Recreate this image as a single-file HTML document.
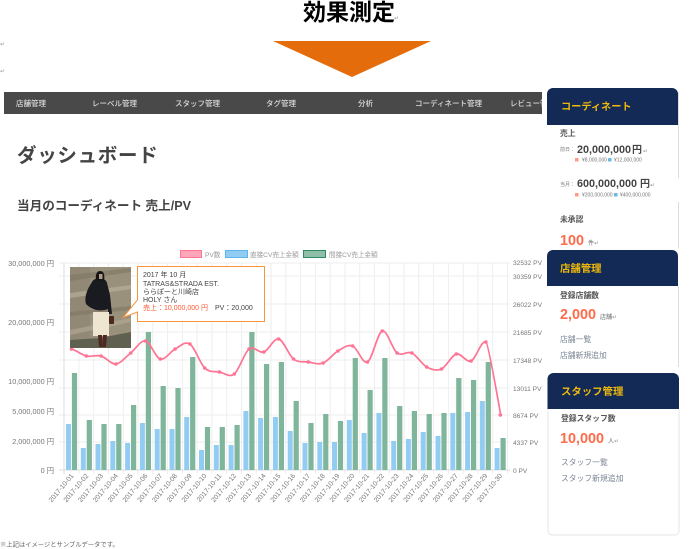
<!DOCTYPE html>
<html lang="ja">
<head>
<meta charset="utf-8">
<title>効果測定</title>
<style>
html,body{margin:0;padding:0;background:#fff;width:700px;height:549px;overflow:hidden}
svg.root{display:block;filter:blur(.35px)}
text{font-family:"Liberation Sans","Noto Sans CJK JP",sans-serif}
.nav{fill:#dcdcdc;font-size:7.5px;font-weight:500}
.yl{fill:#777;font-size:7.3px;text-anchor:end}
.yr{fill:#777;font-size:6.6px}
.xl{fill:#777;font-size:6.8px;text-anchor:end}
.lg{fill:#999;font-size:6.6px}
.tt{fill:#444;font-size:7px}
.cardt{fill:#f0b90b;font-size:10.4px;font-weight:700}
.lab{fill:#555;font-size:7.8px;font-weight:700}
.big{fill:#ff6b4a;font-size:14.4px;font-weight:700}
.lnk{fill:#7a8494;font-size:7.8px}
.num{fill:#444;font-size:10.8px;font-weight:700}
.tiny{fill:#777;font-size:5px}
.mk{fill:#999;font-size:6px}
.b rect{fill:#93ccf3}
.g rect{fill:#7eb59b}
.gd line{stroke:#eeeeee;stroke-width:1}
.p circle{fill:#ff7393;r:1.8px}
</style>
</head>
<body>
<svg class="root" width="700" height="549" viewBox="0 0 700 549" xmlns="http://www.w3.org/2000/svg">
<!-- heading -->
<text x="303" y="20" font-size="23" font-weight="700" fill="#000" style="font-weight:700">効果測定</text>
<text x="394" y="20" class="mk">↵</text>
<text x="0" y="46" class="mk">↵</text>
<text x="0" y="73" class="mk">↵</text>
<polygon points="273,41 431,41 352,77" fill="#e46c0a"/>

<!-- nav -->
<rect x="4" y="92" width="538" height="22" fill="#494949"/>
<text x="16" y="106" class="nav">店舗管理</text>
<text x="92" y="106" class="nav">レーベル管理</text>
<text x="175" y="106" class="nav">スタッフ管理</text>
<text x="266" y="106" class="nav">タグ管理</text>
<text x="358" y="106" class="nav">分析</text>
<text x="415" y="106" class="nav">コーディネート管理</text>
<svg x="0" y="90" width="542" height="26"><text x="510" y="16" class="nav">レビュー管理</text></svg>

<!-- titles -->
<text x="17" y="162" font-size="19.5" font-weight="700" fill="#444" letter-spacing=".7">ダッシュボード</text>
<text x="17" y="210" font-size="12.6" font-weight="700" fill="#444">当月のコーディネート 売上/PV</text>

<!-- legend -->
<rect x="180.5" y="250.5" width="21" height="7" fill="#ffa6bb" stroke="#ff7393"/>
<text x="205" y="257" class="lg">PV数</text>
<rect x="225.5" y="250.5" width="22" height="7" fill="#93ccf3" stroke="#5cb3ee"/>
<text x="250" y="257" class="lg">直接CV売上金額</text>
<rect x="303.5" y="250.5" width="22" height="7" fill="#8fbfa8" stroke="#2e8b62"/>
<text x="329" y="257" class="lg">間接CV売上金額</text>

<!-- grid -->
<g class="gd">
<line x1="59" x2="510" y1="263" y2="263"/><line x1="59" x2="510" y1="276" y2="276"/><line x1="59" x2="510" y1="304" y2="304"/><line x1="59" x2="510" y1="332" y2="332"/><line x1="59" x2="510" y1="360" y2="360"/><line x1="59" x2="510" y1="388" y2="388"/><line x1="59" x2="510" y1="415" y2="415"/><line x1="59" x2="510" y1="442" y2="442"/>
<line x1="64" x2="64" y1="263" y2="474" style="stroke:#ddd"/><line x1="78.900" x2="78.900" y1="263" y2="474"/><line x1="93.700" x2="93.700" y1="263" y2="474"/><line x1="108.500" x2="108.500" y1="263" y2="474"/><line x1="123.300" x2="123.300" y1="263" y2="474"/><line x1="138" x2="138" y1="263" y2="474"/><line x1="152.800" x2="152.800" y1="263" y2="474"/><line x1="167.600" x2="167.600" y1="263" y2="474"/><line x1="182.400" x2="182.400" y1="263" y2="474"/><line x1="197.100" x2="197.100" y1="263" y2="474"/><line x1="211.900" x2="211.900" y1="263" y2="474"/><line x1="226.700" x2="226.700" y1="263" y2="474"/><line x1="241.500" x2="241.500" y1="263" y2="474"/><line x1="256.300" x2="256.300" y1="263" y2="474"/><line x1="271" x2="271" y1="263" y2="474"/><line x1="285.800" x2="285.800" y1="263" y2="474"/><line x1="300.600" x2="300.600" y1="263" y2="474"/><line x1="315.400" x2="315.400" y1="263" y2="474"/><line x1="330.200" x2="330.200" y1="263" y2="474"/><line x1="344.900" x2="344.900" y1="263" y2="474"/><line x1="359.700" x2="359.700" y1="263" y2="474"/><line x1="374.500" x2="374.500" y1="263" y2="474"/><line x1="389.300" x2="389.300" y1="263" y2="474"/><line x1="404" x2="404" y1="263" y2="474"/><line x1="418.800" x2="418.800" y1="263" y2="474"/><line x1="433.600" x2="433.600" y1="263" y2="474"/><line x1="448.400" x2="448.400" y1="263" y2="474"/><line x1="463.200" x2="463.200" y1="263" y2="474"/><line x1="477.900" x2="477.900" y1="263" y2="474"/><line x1="492.700" x2="492.700" y1="263" y2="474"/><line x1="507.500" x2="507.500" y1="263" y2="474"/>
<line x1="59" x2="510" y1="470" y2="470" style="stroke:#dcdcdc"/>
</g>

<!-- bars blue -->
<g class="b">
<rect x="66" y="424" width="5" height="46"/><rect x="80.800" y="448" width="5" height="22"/><rect x="95.500" y="444" width="5" height="26"/><rect x="110.300" y="441" width="5" height="29"/><rect x="125.100" y="443" width="5" height="27"/><rect x="139.900" y="423" width="5" height="47"/><rect x="154.700" y="429" width="5" height="41"/><rect x="169.500" y="429" width="5" height="41"/><rect x="184.200" y="417" width="5" height="53"/><rect x="199" y="450" width="5" height="20"/><rect x="213.800" y="445" width="5" height="25"/><rect x="228.600" y="445" width="5" height="25"/><rect x="243.400" y="411" width="5" height="59"/><rect x="258.100" y="418" width="5" height="52"/><rect x="272.900" y="417" width="5" height="53"/><rect x="287.700" y="431" width="5" height="39"/><rect x="302.500" y="443" width="5" height="27"/><rect x="317.300" y="442" width="5" height="28"/><rect x="332" y="442" width="5" height="28"/><rect x="346.800" y="420" width="5" height="50"/><rect x="361.600" y="433" width="5" height="37"/><rect x="376.400" y="413" width="5" height="57"/><rect x="391.200" y="441" width="5" height="29"/><rect x="405.900" y="439" width="5" height="31"/><rect x="420.700" y="432" width="5" height="38"/><rect x="435.500" y="436" width="5" height="34"/><rect x="450.300" y="413" width="5" height="57"/><rect x="465.100" y="412" width="5" height="58"/><rect x="479.800" y="401" width="5" height="69"/><rect x="494.600" y="448" width="5" height="22"/>
</g>
<!-- bars green -->
<g class="g">
<rect x="71.900" y="373" width="5.200" height="97"/><rect x="86.700" y="420" width="5.200" height="50"/><rect x="101.400" y="424" width="5.200" height="46"/><rect x="116.200" y="424" width="5.200" height="46"/><rect x="131" y="405" width="5.200" height="65"/><rect x="145.800" y="332" width="5.200" height="138"/><rect x="160.600" y="386" width="5.200" height="84"/><rect x="175.400" y="388" width="5.200" height="82"/><rect x="190.100" y="357" width="5.200" height="113"/><rect x="204.900" y="427" width="5.200" height="43"/><rect x="219.700" y="427" width="5.200" height="43"/><rect x="234.500" y="425" width="5.200" height="45"/><rect x="249.300" y="332" width="5.200" height="138"/><rect x="264" y="364" width="5.200" height="106"/><rect x="278.800" y="362" width="5.200" height="108"/><rect x="293.600" y="401" width="5.200" height="69"/><rect x="308.400" y="423" width="5.200" height="47"/><rect x="323.200" y="414" width="5.200" height="56"/><rect x="337.900" y="421" width="5.200" height="49"/><rect x="352.700" y="358" width="5.200" height="112"/><rect x="367.500" y="390" width="5.200" height="80"/><rect x="382.300" y="358" width="5.200" height="112"/><rect x="397.100" y="406" width="5.200" height="64"/><rect x="411.800" y="411" width="5.200" height="59"/><rect x="426.600" y="414" width="5.200" height="56"/><rect x="441.400" y="413" width="5.200" height="57"/><rect x="456.200" y="378" width="5.200" height="92"/><rect x="471" y="380" width="5.200" height="90"/><rect x="485.700" y="362" width="5.200" height="108"/><rect x="500.500" y="438" width="5.200" height="32"/>
</g>

<!-- pink line -->
<path fill="none" stroke="#ff7393" stroke-width="1.7" d="M71.500 349c4.900 1.200 9.900 5.800 14.800 7c4.900 1.200 9.900 -1.400 14.800 0c4.900 1.400 9.900 8.500 14.800 8c4.900 -.5 9.900 -7.100 14.800 -11c4.900 -3.900 9.900 -13 14.800 -12c4.900 1 9.900 16.600 14.800 18c4.900 1.400 9.900 -7.400 14.800 -10c4.900 -2.600 9.900 -8.200 14.800 -5c4.900 3.200 9.900 19.200 14.800 24c4.900 4.800 9.900 3 14.800 4c4.900 1 9.900 5.900 14.800 2c4.900 -3.900 9.900 -21.300 14.800 -25c4.900 -3.700 9.900 4.700 14.800 3c4.900 -1.700 9.900 -14.200 14.800 -13c4.900 1.200 9.900 16.100 14.800 20c4.900 3.900 9.900 2.300 14.800 3c4.900 .7 9.900 2.900 14.800 1c4.900 -1.900 9.900 -9.100 14.800 -12c4.900 -2.900 9.900 -6.900 14.800 -5c4.900 1.900 9.900 18.600 14.800 16c4.900 -2.600 9.900 -29.500 14.800 -31c4.900 -1.500 9.900 18.300 14.800 22c4.900 3.700 9.900 -2.400 14.800 0c4.900 2.400 9.900 11.300 14.800 14c4.900 2.700 9.900 4.200 14.800 2c4.900 -2.200 9.900 -13.600 14.800 -15c4.900 -1.400 9.900 9 14.800 7c4.900 -2 9.900 -21 14.800 -19c2 1 9.900 45 14.800 73"/>
<g class="p">
<circle cx="71.500" cy="349"/><circle cx="86.300" cy="356"/><circle cx="101.100" cy="356"/><circle cx="115.900" cy="364"/><circle cx="130.700" cy="353"/><circle cx="145.500" cy="341"/><circle cx="160.300" cy="359"/><circle cx="175.100" cy="349"/><circle cx="189.900" cy="344"/><circle cx="204.700" cy="368"/><circle cx="219.500" cy="372"/><circle cx="234.300" cy="374"/><circle cx="249.100" cy="349"/><circle cx="263.900" cy="352"/><circle cx="278.700" cy="339"/><circle cx="293.500" cy="359"/><circle cx="308.300" cy="362"/><circle cx="323.100" cy="363"/><circle cx="337.900" cy="351"/><circle cx="352.700" cy="346"/><circle cx="367.500" cy="362"/><circle cx="382.300" cy="331"/><circle cx="397.100" cy="353"/><circle cx="411.900" cy="353"/><circle cx="426.700" cy="367"/><circle cx="441.500" cy="369"/><circle cx="456.300" cy="354"/><circle cx="471.100" cy="361"/><circle cx="485.900" cy="342"/><circle cx="500.300" cy="415"/>
</g>

<!-- y axis labels -->
<text x="54" y="266" class="yl">30,000,000 円</text>
<text x="54" y="325" class="yl">20,000,000 円</text>
<text x="54" y="384" class="yl">10,000,000 円</text>
<text x="54" y="414" class="yl">5,000,000 円</text>
<text x="54" y="444" class="yl">2,000,000 円</text>
<text x="54" y="473" class="yl">0 円</text>
<text x="513" y="265" class="yr">32532 PV</text>
<text x="513" y="279" class="yr">30359 PV</text>
<text x="513" y="307" class="yr">26022 PV</text>
<text x="513" y="335" class="yr">21685 PV</text>
<text x="513" y="363" class="yr">17348 PV</text>
<text x="513" y="391" class="yr">13011 PV</text>
<text x="513" y="418" class="yr">8674 PV</text>
<text x="513" y="445" class="yr">4337 PV</text>
<text x="513" y="473" class="yr">0 PV</text>

<!-- x axis labels -->
<g>
<text class="xl" transform="translate(74,476) rotate(-50)">2017-10-01</text>
<text class="xl" transform="translate(88.800,476) rotate(-50)">2017-10-02</text>
<text class="xl" transform="translate(103.500,476) rotate(-50)">2017-10-03</text>
<text class="xl" transform="translate(118.300,476) rotate(-50)">2017-10-04</text>
<text class="xl" transform="translate(133.100,476) rotate(-50)">2017-10-05</text>
<text class="xl" transform="translate(147.900,476) rotate(-50)">2017-10-06</text>
<text class="xl" transform="translate(162.700,476) rotate(-50)">2017-10-07</text>
<text class="xl" transform="translate(177.500,476) rotate(-50)">2017-10-08</text>
<text class="xl" transform="translate(192.200,476) rotate(-50)">2017-10-09</text>
<text class="xl" transform="translate(207,476) rotate(-50)">2017-10-10</text>
<text class="xl" transform="translate(221.800,476) rotate(-50)">2017-10-11</text>
<text class="xl" transform="translate(236.600,476) rotate(-50)">2017-10-12</text>
<text class="xl" transform="translate(251.400,476) rotate(-50)">2017-10-13</text>
<text class="xl" transform="translate(266.100,476) rotate(-50)">2017-10-14</text>
<text class="xl" transform="translate(280.900,476) rotate(-50)">2017-10-15</text>
<text class="xl" transform="translate(295.700,476) rotate(-50)">2017-10-16</text>
<text class="xl" transform="translate(310.500,476) rotate(-50)">2017-10-17</text>
<text class="xl" transform="translate(325.300,476) rotate(-50)">2017-10-18</text>
<text class="xl" transform="translate(340,476) rotate(-50)">2017-10-19</text>
<text class="xl" transform="translate(354.800,476) rotate(-50)">2017-10-20</text>
<text class="xl" transform="translate(369.600,476) rotate(-50)">2017-10-21</text>
<text class="xl" transform="translate(384.400,476) rotate(-50)">2017-10-22</text>
<text class="xl" transform="translate(399.200,476) rotate(-50)">2017-10-23</text>
<text class="xl" transform="translate(413.900,476) rotate(-50)">2017-10-24</text>
<text class="xl" transform="translate(428.700,476) rotate(-50)">2017-10-25</text>
<text class="xl" transform="translate(443.500,476) rotate(-50)">2017-10-26</text>
<text class="xl" transform="translate(458.300,476) rotate(-50)">2017-10-27</text>
<text class="xl" transform="translate(473.100,476) rotate(-50)">2017-10-28</text>
<text class="xl" transform="translate(487.800,476) rotate(-50)">2017-10-29</text>
<text class="xl" transform="translate(502.600,476) rotate(-50)">2017-10-30</text>
</g>

<!-- photo -->
<rect x="70" y="267" width="61" height="81" fill="#9a917c"/>
<polygon points="70,267 90,267 90,340 70,340" fill="#8a8270" opacity=".55"/>
<polygon points="70,275 131,268 131,272 70,281" fill="#7e7662" opacity=".6"/>
<polygon points="70,293 131,285 131,289 70,298" fill="#b8af9a" opacity=".7"/>
<polygon points="70,312 131,306 131,310 70,316" fill="#7f7662" opacity=".6"/>
<polygon points="70,330 131,318 131,322 70,335" fill="#b5ac96" opacity=".6"/>
<polygon points="70,340 100,338 131,332 131,348 70,348" fill="#5f6050"/>
<path d="M92 282C94 277 106 277 107 283L110 295L112 314L108 314L108 309C100 312 92 310 86 304C84 296 88 288 92 282Z" fill="#1a1b20"/>
<path d="M96 280C95 273 98 271 100 271C104 271 105 275 104 281Z" fill="#141416"/>
<rect x="99" y="274" width="3.500" height="5" fill="#b59a85"/>
<rect x="93" y="312" width="16" height="24" fill="#efe6d2"/>
<path d="M98 335h4l1 12h-4zM103 335h4l-1 12h-3z" fill="#4c2a22"/>
<rect x="109" y="316" width="5" height="8" rx="1" fill="#4a2a20"/>

<!-- tooltip -->
<path d="M137.500 266.500H264.500V321.500H137.500V312L123 317.500L137.500 300Z" fill="#fff" stroke="#f7963e" stroke-width="1"/>
<text x="143" y="277" class="tt">2017 年 10 月</text>
<text x="143" y="286" class="tt">TATRAS&amp;STRADA EST.</text>
<text x="143" y="294" class="tt">ららぽーと川崎店</text>
<text x="143" y="302" class="tt">HOLY さん</text>
<text x="143" y="310" class="tt"><tspan fill="#ff5a36">売上：10,000,000 円</tspan><tspan dx="7">PV：20,000</tspan></text>

<!-- footnote -->
<text x="0" y="546.500" fill="#666" font-size="6.3">※上記はイメージとサンプルデータです。</text>

<!-- card 1 -->
<path d="M678.500 92V248" stroke="#ddd" fill="none"/>
<path d="M547 125V94a6 6 0 0 1 6-6H672a6 6 0 0 1 6 6V125Z" fill="#122a55"/>
<rect x="660" y="178" width="25" height="24" fill="#fff"/>
<text x="561" y="110" class="cardt" style="font-size:10.200px">コーディネート</text>
<text x="560" y="136" class="lab">売上</text>
<text x="560" y="151" fill="#777" font-size="5">前日：</text>
<text x="577" y="153" class="num">20,000,000<tspan dx="1" font-size="10">円</tspan></text>
<text x="643" y="153" class="mk">↵</text>
<rect x="575" y="158" width="3.500" height="3.500" fill="#ff9a85"/>
<text x="582" y="161.500" class="tiny">¥8,000,000</text>
<rect x="608" y="158" width="3.500" height="3.500" fill="#6db9e0"/>
<text x="614" y="161.500" class="tiny">¥12,000,000</text>
<text x="560" y="186" fill="#777" font-size="5">当月：</text>
<text x="577" y="187" class="num">600,000,000 <tspan font-size="10">円</tspan></text>
<text x="650" y="187" class="mk">↵</text>
<rect x="575" y="193" width="3.500" height="3.500" fill="#ff9a85"/>
<text x="582" y="196.500" class="tiny">¥200,000,000</text>
<rect x="614" y="193" width="3.500" height="3.500" fill="#6db9e0"/>
<text x="620" y="196.500" class="tiny">¥400,000,000</text>
<text x="560" y="222" class="lab">未承認</text>
<text x="560" y="245" class="big">100</text>
<text x="588" y="245" fill="#666" font-size="6">件</text>
<text x="594" y="245" class="mk">↵</text>

<!-- card 2 -->
<path d="M678.500 286V367" stroke="#ddd" fill="none"/>
<path d="M547 286V256a6 6 0 0 1 6-6H672a6 6 0 0 1 6 6V286Z" fill="#122a55"/>
<text x="560" y="272" class="cardt">店舗管理</text>
<text x="560" y="298" class="lab">登録店舗数</text>
<text x="560" y="319" class="big">2,000</text>
<text x="600" y="319" fill="#666" font-size="6">店舗</text>
<text x="612" y="319" class="mk">↵</text>
<text x="560" y="342" class="lnk">店舗一覧</text>
<text x="560" y="358" class="lnk">店舗新規追加</text>

<!-- card 3 -->
<path d="M548 409V531a4 4 0 0 0 4 4H675a4 4 0 0 0 4-4V409" stroke="#e4e4e4" fill="#fff"/>
<path d="M547.500 409V379a6 6 0 0 1 6-6H673a6 6 0 0 1 6 6V409Z" fill="#122a55"/>
<text x="561" y="395" class="cardt">スタッフ管理</text>
<text x="561" y="421" class="lab">登録スタッフ数</text>
<text x="560" y="443" class="big">10,000</text>
<text x="608" y="443" fill="#666" font-size="6">人</text>
<text x="614" y="443" class="mk">↵</text>
<text x="561" y="465" class="lnk">スタッフ一覧</text>
<text x="561" y="481" class="lnk">スタッフ新規追加</text>
</svg>
</body>
</html>
